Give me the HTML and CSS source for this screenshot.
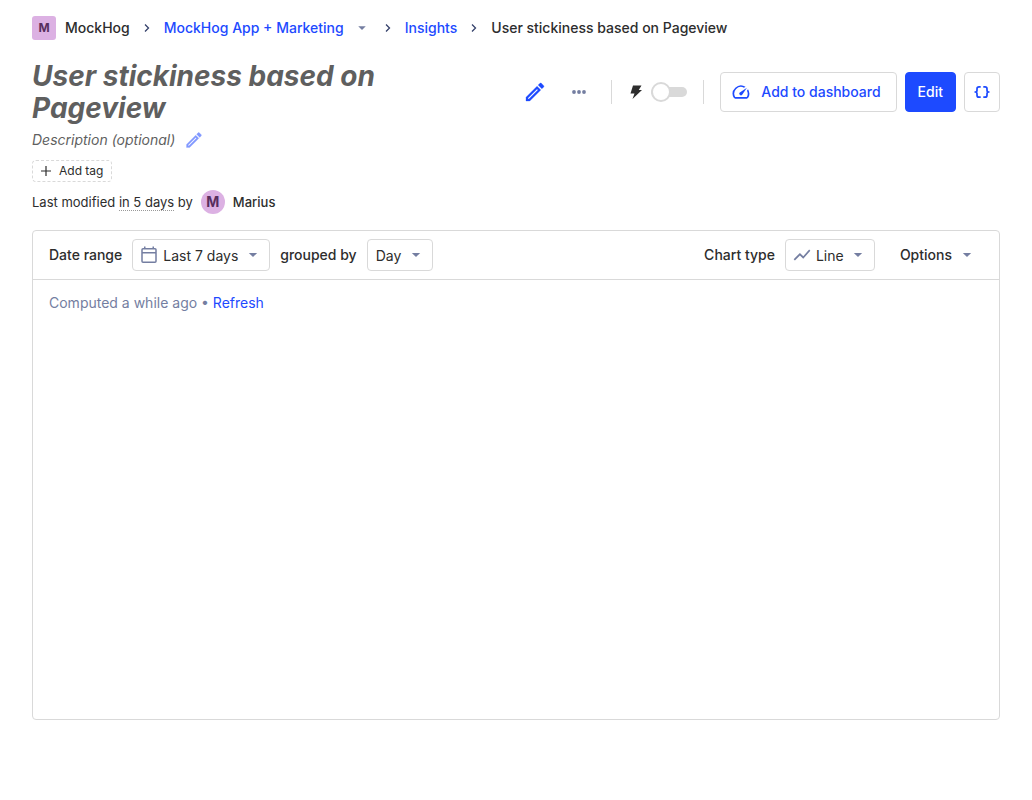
FILE: index.html
```html
<!DOCTYPE html>
<html lang="en">
<head>
<meta charset="utf-8">
<meta name="viewport" content="width=device-width, initial-scale=1">
<title>User stickiness based on Pageview</title>
<link rel="stylesheet" href="styles.css">
</head>
<body>
<svg class="sprite" aria-hidden="true">
  <symbol id="pencil" viewBox="0 0 24 24"><path fill="currentColor" stroke="currentColor" stroke-width=".3" d="M14.06 9.02l.92.92L5.92 19H5v-.92l9.06-9.06M17.66 3c-.25 0-.51.1-.7.29l-1.83 1.83 3.75 3.75 1.83-1.83c.39-.39.39-1.02 0-1.41l-2.34-2.34c-.2-.2-.45-.29-.71-.29zm-3.6 3.19L3 17.25V21h3.75L17.81 9.94l-3.75-3.75z"/></symbol>
  <symbol id="caret" viewBox="0 0 24 24"><path fill="currentColor" d="M7 9.5l5 5 5-5z"/></symbol>
  <symbol id="chevron" viewBox="0 0 16 16"><path fill="none" stroke="currentColor" stroke-width="1.3" d="M6 4.500L9.500 8 6 11.500"/></symbol>
</svg>
<div class="page">
  <nav class="crumbs" aria-label="Breadcrumb">
    <span class="tile">M</span>
    <span class="org">MockHog</span>
    <svg class="sep"><use href="#chevron"/></svg>
    <a href="#project">MockHog App + Marketing</a>
    <button class="crumb-menu" type="button" aria-label="Switch project"><svg><use href="#caret"/></svg></button>
    <svg class="sep"><use href="#chevron"/></svg>
    <a href="#insights">Insights</a>
    <svg class="sep"><use href="#chevron"/></svg>
    <span>User stickiness based on Pageview</span>
  </nav>

  <header class="head">
    <h1>User stickiness based on Pageview</h1>
    <div class="actions">
      <button class="icon-btn blue" type="button" aria-label="Edit name"><svg><use href="#pencil"/></svg></button>
      <button class="icon-btn muted" type="button" aria-label="More"><svg viewBox="0 0 24 24"><g fill="currentColor"><circle cx="7" cy="12" r="1.9"/><circle cx="12" cy="12" r="1.9"/><circle cx="17" cy="12" r="1.9"/></g></svg></button>
      <span class="rule"></span>
      <label class="turbo">
        <svg viewBox="0 0 16 16" role="img" aria-label="Faster queries"><path fill="currentColor" d="M5 1.500h8.500L10.800 6H14L4.500 15l2-5.500h-4z"/></svg>
        <input type="checkbox" role="switch">
      </label>
      <span class="rule"></span>
      <div class="buttons">
        <button class="btn add" type="button">
          <svg viewBox="0 0 24 24"><path fill="currentColor" d="M20.380 8.570l-1.230 1.850a8 8 0 0 1-.220 7.580H5.070A8 8 0 0 1 15.580 6.850l1.850-1.230A10 10 0 0 0 3.350 19a2 2 0 0 0 1.720 1h13.850a2 2 0 0 0 1.740-1 10 10 0 0 0-.27-10.440zm-9.790 6.840a2 2 0 0 0 2.830 0l5.660-8.490-8.490 5.660a2 2 0 0 0 0 2.830z"/></svg>
          Add to dashboard
        </button>
        <button class="btn primary" type="button">Edit</button>
        <button class="btn code" type="button" aria-label="View source"><svg viewBox="0 0 20 20"><path fill="none" stroke="currentColor" stroke-width="1.700" d="M8.700 4.800H7a2 2 0 0 0-2 2v1.400A1.800 1.800 0 0 1 3.200 10H2.500h.7A1.800 1.800 0 0 1 5 11.800v1.400a2 2 0 0 0 2 2h1.700M11.300 4.800H13a2 2 0 0 1 2 2v1.400a1.800 1.800 0 0 0 1.800 1.800h.7-.7a1.800 1.800 0 0 0-1.800 1.800v1.400a2 2 0 0 1-2 2h-1.700"/></svg></button>
      </div>
    </div>
  </header>

  <div class="desc">
    <i>Description (optional)</i>
    <button type="button" aria-label="Edit description"><svg><use href="#pencil"/></svg></button>
  </div>
  <button class="tag" type="button"><svg viewBox="0 0 14 14"><path fill="none" stroke="currentColor" stroke-width="1.2" d="M7 2v10M2 7h10"/></svg>Add tag</button>
  <div class="modified">
    <span>Last modified <span class="when">in 5 days</span> by</span>
    <span class="avatar">M</span>
    <span class="name">Marius</span>
  </div>

  <main class="card">
    <div class="toolbar">
      <div class="group">
        <label for="range">Date range</label>
        <div class="picker lead">
          <svg class="lead-icon" viewBox="0 0 20 20"><path fill="none" stroke="currentColor" stroke-width="1.500" d="M4 3.750h12a1 1 0 0 1 1 1v11.500a1 1 0 0 1-1 1H4a1 1 0 0 1-1-1V4.750a1 1 0 0 1 1-1zM3 7.750h14M5.750 1.500v3M14.250 1.500v3"/></svg>
          <select id="range"><option>Last 7 days</option></select>
          <svg class="caret"><use href="#caret"/></svg>
        </div>
        <label for="interval">grouped by</label>
        <div class="picker">
          <select id="interval"><option>Day</option></select>
          <svg class="caret"><use href="#caret"/></svg>
        </div>
      </div>
      <div class="group">
        <label for="chart">Chart type</label>
        <div class="picker lead">
          <svg class="lead-icon" viewBox="0 0 24 24"><path fill="currentColor" d="M3.500 18.490l6-6.010 4 4L22 6.920l-1.410-1.410-7.090 7.970-4-4L2 16.990z"/></svg>
          <select id="chart"><option>Line</option></select>
          <svg class="caret"><use href="#caret"/></svg>
        </div>
        <button class="options" type="button">Options<svg><use href="#caret"/></svg></button>
      </div>
    </div>
    <div class="body">Computed a while ago • <a href="#refresh">Refresh</a></div>
  </main>
</div>
</body>
</html>
```
FILE: styles.css
```css
*, *::before, *::after { box-sizing: border-box; }
body {
  margin: 0;
  background: #fff;
  color: #2d2d2d;
  font: 14px/20px Inter, sans-serif;
}
button, select { font: inherit; color: inherit; background: none; border: 0; padding: 0; margin: 0; cursor: pointer; }
a { color: #1d4aff; text-decoration: none; }
svg { flex: none; display: block; }
.sprite { position: absolute; width: 0; height: 0; }
.page { min-height: 100vh; padding: 16px 32px 80px; display: flex; flex-direction: column; align-items: stretch; }

.crumbs { display: flex; align-items: center; gap: 9px; height: 24px; font-weight: 500; white-space: nowrap; }
.tile, .avatar { display: grid; place-items: center; width: 24px; height: 24px; background: #dcb1e3; color: #572e5e; font-weight: 700; }
.tile { border-radius: 3px; font-size: 12px; }
.sep { width: 16px; height: 16px; color: #35416b; }
.crumb-menu { color: #747ea1; }
.crumb-menu svg { width: 18px; height: 18px; }

.head { display: flex; align-items: center; justify-content: space-between; gap: 16px; margin-top: 20px; }
h1 { margin: 0; font-size: 28px; line-height: 32px; font-weight: 700; font-style: italic; color: #5f5f5f; }
.actions { display: flex; align-items: center; flex: none; }
.icon-btn { display: grid; place-items: center; width: 40px; height: 40px; margin-right: 4px; }
.icon-btn svg { width: 24px; height: 24px; }
.blue { color: #1d4aff; }
.muted { color: #747ea1; margin-right: 12px; }
.rule { width: 1px; height: 24px; background: #d9d9d9; }
.turbo { display: flex; align-items: center; gap: 7px; padding: 0 16px; }
.turbo svg { width: 16px; height: 16px; }
.turbo input { appearance: none; display: flex; align-items: center; position: relative; width: 36px; height: 20px; margin: 0; }
.turbo input::before { content: ""; width: 100%; height: 10px; border-radius: 5px; background: #d9d9d9; }
.turbo input::after {
  content: ""; position: absolute; left: 0; top: 0; width: 20px; height: 20px;
  border: 2px solid #d9d9d9; border-radius: 50%; background: #fff;
}
.buttons { display: flex; gap: 8px; margin-left: 16px; }
.btn {
  display: flex; align-items: center; gap: 10px; height: 40px; padding: 0 12px;
  border: 1px solid #d9d9d9; border-radius: 4px; color: #1d4aff; font-weight: 500; white-space: nowrap;
}
.btn svg { width: 20px; height: 20px; }
.btn.add { padding: 0 15px 0 10px; }
.btn.primary { background: #1d4aff; border-color: #1d4aff; color: #fff; }
.btn.code { padding: 0 7px; }

.desc { display: flex; align-items: center; gap: 9px; height: 24px; margin-top: 4px; color: #5f5f5f; }
.desc button { color: #8198ff; }
.desc svg { width: 20px; height: 20px; }
.tag {
  display: flex; align-items: center; align-self: flex-start; gap: 6px; height: 22px; margin-top: 8px; padding: 0 8px 0 6px;
  border: 1px dashed #d9d9d9; border-radius: 4px; font-size: 12px;
}
.tag svg { width: 14px; height: 14px; }
.modified { display: flex; align-items: center; gap: 8px; margin-top: 8px; font-size: 13px; }
.when { border-bottom: 1px dotted #999; }
.avatar { border-radius: 50%; font-size: 14px; }
.name { font-weight: 500; }

.card { flex: 1; margin-top: 16px; border: 1px solid #d9d9d9; border-radius: 4px; }
.toolbar { display: flex; flex-wrap: wrap; justify-content: space-between; padding: 8px 16px; border-bottom: 1px solid #d9d9d9; }
.group { display: flex; align-items: center; gap: 10px; }
.group label { font-weight: 500; }
.picker { position: relative; border: 1px solid #d9d9d9; border-radius: 4px; }
.picker select { display: block; appearance: none; height: 30px; padding: 2px 30px 0 8px; }
.picker.lead select { padding-left: 30px; }
.picker svg { position: absolute; top: 5px; width: 20px; height: 20px; pointer-events: none; color: #747ea1; }
.lead-icon { left: 6px; }
.caret { right: 6px; }
.options { display: flex; align-items: center; gap: 5px; height: 32px; padding: 0 6px 0 15px; font-weight: 500; }
.options svg { width: 20px; height: 20px; color: #747ea1; }
.body { padding: 13px 16px; color: #747ea1; }
```
